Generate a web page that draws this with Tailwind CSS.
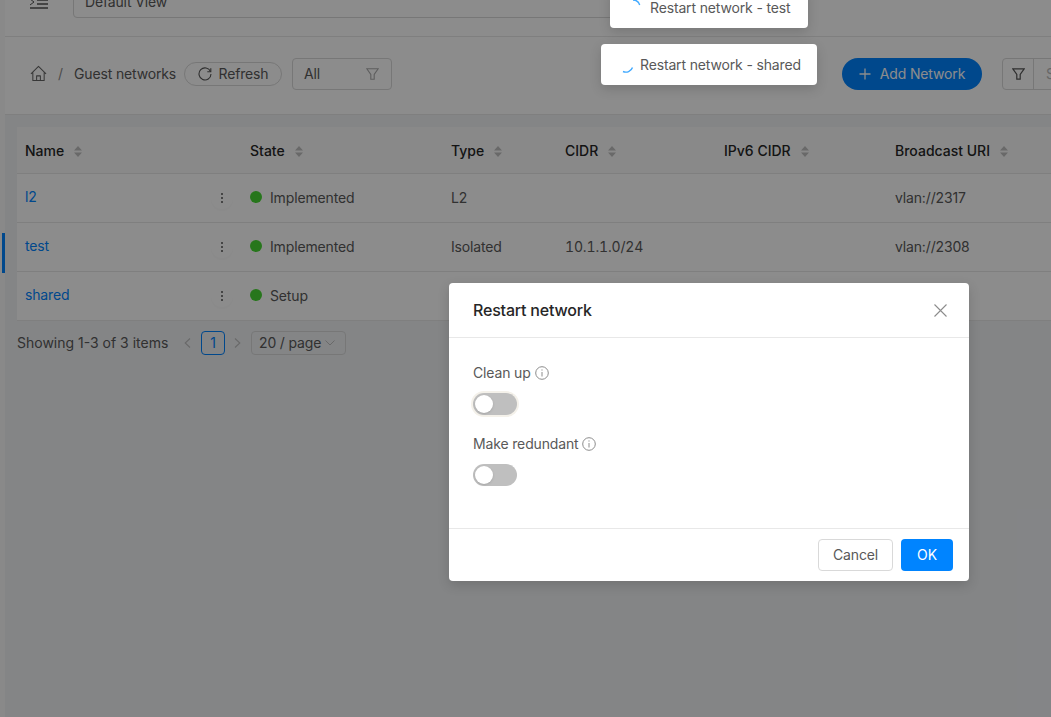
<!DOCTYPE html>
<html>

<head>
  <script src="https://cdn.jsdelivr.net/npm/@tailwindcss/browser@4"></script>
</head>

<body class="bg-[#fafafa]">
  <div class="relative h-[717px] w-[1051px] overflow-hidden font-['Inter','Liberation_Sans',sans-serif] text-sm tracking-[-0.15px] text-[#595959]">
    <div class="ml-[5px] h-full bg-[#f0f2f5]">
      <!-- header -->
      <div class="flex h-[37px] items-end border-b border-[#e8e8e8] bg-white pb-[18px]">
        <svg class="ml-[25px] mb-[9px] h-[14px] w-[18px]" viewBox="0 0 18 14" fill="none" stroke="#555" stroke-width="1.6">
          <path d="M0 13h18M7 9h11M7 5h11" />
          <path d="M0 4l4 3-4 3" stroke-width="1" />
        </svg>
        <div class="ml-[25px] flex h-[32px] w-[560px] items-center rounded-b border border-[#d9d9d9] px-[11px]">Default View</div>
      </div>

      <!-- toolbar -->
      <div class="flex h-[78px] items-center border-b border-[#e8e8e8] bg-white pb-[4px] pl-[25px]">
        <svg class="h-[17px] w-[17px] shrink-0" viewBox="0 0 18 18" fill="none" stroke="#666" stroke-width="1.1" stroke-linejoin="round">
          <path d="M1 9.5L9 1.5l8 8M3 8v8.5h12V8" />
          <path d="M7 16.5v-5h4v5" />
        </svg>
        <span class="ml-[11px] w-[16px] shrink-0 text-[#8c8c8c]">/</span>
        <span class="w-[101px] shrink-0 whitespace-nowrap">Guest networks</span>
        <button class="ml-[9px] flex h-[24px] w-[98px] shrink-0 items-center justify-center gap-[7px] rounded-full border border-[#d9d9d9]">
          <svg class="h-[14px] w-[14px]" viewBox="0 0 14 14" fill="none" stroke="#555" stroke-width="1.1">
            <path d="M12.5 4.5A6 6 0 1 0 13 7" />
            <path d="M12.8 1.2v3.5H9.3" />
          </svg>
          Refresh
        </button>
        <div class="ml-[10px] flex h-[32px] w-[100px] shrink-0 items-center justify-between rounded border border-[#d9d9d9] pl-[11px] pr-[12px]">
          All
          <svg class="h-[12px] w-[13px]" viewBox="0 0 13 12" fill="none" stroke="#aaa" stroke-width="1.1">
            <path d="M.8.8h11.4L8.2 6.5v4.7H4.8V6.5z" />
          </svg>
        </div>
        <button class="ml-[450px] flex h-[32px] w-[140px] shrink-0 items-center justify-center gap-[9px] whitespace-nowrap rounded-full bg-[#0084ff] text-white">
          <svg class="h-[12px] w-[12px]" viewBox="0 0 12 12" stroke="#fff" stroke-width="1.3">
            <path d="M6 .5v11M.5 6h11" />
          </svg>
          Add Network
        </button>
        <div class="ml-[20px] flex h-[32px] w-[100px] shrink-0 rounded-l border border-[#d9d9d9]">
          <div class="flex w-[31px] items-center justify-center border-r border-[#d9d9d9]">
            <svg class="h-[12px] w-[13px]" viewBox="0 0 13 12" fill="none" stroke="#555" stroke-width="1.2">
              <path d="M.8.8h11.4L8.2 6.5v4.7H4.8V6.5z" />
            </svg>
          </div>
          <span class="pl-[12px] leading-[30px] text-[#bbb]">S</span>
        </div>
      </div>

      <!-- table -->
      <div class="pl-[12px] pt-[12px]">
        <table class="w-[1034px] table-fixed border-separate border-spacing-0 bg-white text-left">
          <colgroup>
            <col class="w-[225px]" />
            <col class="w-[201px]" />
            <col class="w-[114px]" />
            <col class="w-[159px]" />
            <col class="w-[171px]" />
            <col />
          </colgroup>
          <thead class="bg-[#fafafa] tracking-normal text-[#262626]">
            <tr class="h-[47px]">
              <th class="border-b border-[#e8e8e8] pl-[8px] pt-[2px] font-medium"><span class="flex items-center gap-[10px]">Name
                  <svg class="h-[11px] w-[8px]" viewBox="0 0 8 11" fill="#bfbfbf"><path d="M4 0l4 4.5H0zM4 11L0 6.5h8z" /></svg></span></th>
              <th class="border-b border-[#e8e8e8] pl-[8px] pt-[2px] font-medium"><span class="flex items-center gap-[10px]">State
                  <svg class="h-[11px] w-[8px]" viewBox="0 0 8 11" fill="#bfbfbf"><path d="M4 0l4 4.5H0zM4 11L0 6.5h8z" /></svg></span></th>
              <th class="border-b border-[#e8e8e8] pl-[8px] pt-[2px] font-medium"><span class="flex items-center gap-[10px]">Type
                  <svg class="h-[11px] w-[8px]" viewBox="0 0 8 11" fill="#bfbfbf"><path d="M4 0l4 4.5H0zM4 11L0 6.5h8z" /></svg></span></th>
              <th class="border-b border-[#e8e8e8] pl-[8px] pt-[2px] font-medium"><span class="flex items-center gap-[10px]">CIDR
                  <svg class="h-[11px] w-[8px]" viewBox="0 0 8 11" fill="#bfbfbf"><path d="M4 0l4 4.5H0zM4 11L0 6.5h8z" /></svg></span></th>
              <th class="border-b border-[#e8e8e8] pl-[8px] pt-[2px] font-medium"><span class="flex items-center gap-[10px]">IPv6 CIDR
                  <svg class="h-[11px] w-[8px]" viewBox="0 0 8 11" fill="#bfbfbf"><path d="M4 0l4 4.5H0zM4 11L0 6.5h8z" /></svg></span></th>
              <th class="border-b border-[#e8e8e8] pl-[8px] pt-[2px] font-medium"><span class="flex items-center gap-[10px] whitespace-nowrap">Broadcast URI
                  <svg class="h-[11px] w-[8px]" viewBox="0 0 8 11" fill="#bfbfbf"><path d="M4 0l4 4.5H0zM4 11L0 6.5h8z" /></svg></span></th>
            </tr>
          </thead>
          <tbody>
            <tr class="h-[49px]">
              <td class="border-b border-[#e8e8e8] pl-[8px]"><div class="flex items-center justify-between pr-[9px] text-[#0084ff]"><span class="-mt-[2px]">l2</span>
                  <span class="flex h-[22px] w-[22px] items-center justify-center rounded-full shadow-[0_2px_1px_rgba(0,0,0,0.02)]"><svg class="h-[12px] w-[4px]" viewBox="0 0 4 12" fill="#555"><circle cx="2" cy="2" r="1" /><circle cx="2" cy="6" r="1" /><circle cx="2" cy="10" r="1" /></svg></span></div></td>
              <td class="border-b border-[#e8e8e8] pl-[8px]"><div class="flex items-center gap-[8px]"><span class="-mt-[2px] h-[12px] w-[12px] rounded-full bg-[#48d834]"></span>Implemented</div></td>
              <td class="border-b border-[#e8e8e8] pl-[8px]">L2</td>
              <td class="border-b border-[#e8e8e8] pl-[8px]"></td>
              <td class="border-b border-[#e8e8e8] pl-[8px]"></td>
              <td class="border-b border-[#e8e8e8] pl-[8px]">vlan://2317</td>
            </tr>
            <tr class="h-[49px]">
              <td class="border-b border-[#e8e8e8] pl-[8px]"><div class="flex items-center justify-between pr-[9px] text-[#0084ff]"><span class="-mt-[2px]">test</span>
                  <span class="flex h-[22px] w-[22px] items-center justify-center rounded-full shadow-[0_2px_1px_rgba(0,0,0,0.02)]"><svg class="h-[12px] w-[4px]" viewBox="0 0 4 12" fill="#555"><circle cx="2" cy="2" r="1" /><circle cx="2" cy="6" r="1" /><circle cx="2" cy="10" r="1" /></svg></span></div></td>
              <td class="border-b border-[#e8e8e8] pl-[8px]"><div class="flex items-center gap-[8px]"><span class="-mt-[2px] h-[12px] w-[12px] rounded-full bg-[#48d834]"></span>Implemented</div></td>
              <td class="border-b border-[#e8e8e8] pl-[8px]">Isolated</td>
              <td class="border-b border-[#e8e8e8] pl-[8px] tabular-nums">10.1.1.0/24</td>
              <td class="border-b border-[#e8e8e8] pl-[8px]"></td>
              <td class="border-b border-[#e8e8e8] pl-[8px]">vlan://2308</td>
            </tr>
            <tr class="h-[49px]">
              <td class="border-b border-[#e8e8e8] pl-[8px]"><div class="flex items-center justify-between pr-[9px] text-[#0084ff]"><span class="-mt-[2px]">shared</span>
                  <span class="flex h-[22px] w-[22px] items-center justify-center rounded-full shadow-[0_2px_1px_rgba(0,0,0,0.02)]"><svg class="h-[12px] w-[4px]" viewBox="0 0 4 12" fill="#555"><circle cx="2" cy="2" r="1" /><circle cx="2" cy="6" r="1" /><circle cx="2" cy="10" r="1" /></svg></span></div></td>
              <td class="border-b border-[#e8e8e8] pl-[8px]"><div class="flex items-center gap-[8px]"><span class="-mt-[2px] h-[12px] w-[12px] rounded-full bg-[#48d834]"></span>Setup</div></td>
              <td class="border-b border-[#e8e8e8] pl-[8px]"></td>
              <td class="border-b border-[#e8e8e8] pl-[8px]"></td>
              <td class="border-b border-[#e8e8e8] pl-[8px]"></td>
              <td class="border-b border-[#e8e8e8] pl-[8px]"></td>
            </tr>
          </tbody>
        </table>

        <!-- pagination -->
        <div class="mt-[10px] flex items-center whitespace-nowrap">
          <span class="w-[152px] tracking-normal">Showing 1-3 of 3 items</span>
          <svg class="ml-[15px] h-[10px] w-[7px]" viewBox="0 0 7 10" fill="none" stroke="#bfbfbf" stroke-width="1.1"><path d="M6 .5L1.2 5 6 9.5" /></svg>
          <span class="ml-[10px] flex h-[24px] w-[24px] items-center justify-center rounded border border-[#0084ff] text-[#0084ff]">1</span>
          <svg class="ml-[9px] h-[10px] w-[7px]" viewBox="0 0 7 10" fill="none" stroke="#bfbfbf" stroke-width="1.1"><path d="M1 .5L5.8 5 1 9.5" /></svg>
          <div class="ml-[10px] flex h-[24px] w-[95px] items-center justify-between rounded border border-[#d9d9d9] pl-[7px] pr-[10px]">
            20 / page
            <svg class="h-[6px] w-[10px]" viewBox="0 0 10 6" fill="none" stroke="#bfbfbf" stroke-width="1"><path d="M.5.5L5 5 9.5.5" /></svg>
          </div>
        </div>
      </div>
    </div>

    <!-- selected row marker -->
    <div class="absolute left-[2px] top-[233px] h-[40px] w-[3px] bg-[#0084ff]"></div>

    <!-- dimmed mask -->
    <div class="absolute inset-0 bg-black/45"></div>

    <!-- notifications -->
    <div class="absolute left-[610px] top-[-13px] flex h-[41px] w-[198px] items-center rounded bg-white pl-[40px] shadow-[0_4px_12px_rgba(0,0,0,0.15)]">
      <svg class="absolute left-[15px] top-[12px] h-[16px] w-[16px]" viewBox="0 0 16 16" fill="none" stroke="#40a9ff" stroke-width="1.4"><path d="M8 1a7 7 0 0 1 6.7 5" /></svg>
      Restart network - test
    </div>
    <div class="absolute left-[601px] top-[44px] flex h-[41px] w-[216px] items-center rounded bg-white pl-[39px] shadow-[0_4px_12px_rgba(0,0,0,0.15)]">
      <svg class="absolute left-[17px] top-[13px] h-[16px] w-[16px]" viewBox="0 0 16 16" fill="none" stroke="#40a9ff" stroke-width="1.4"><path d="M14.5 10.5A7 7 0 0 1 5 14.5" /></svg>
      Restart network - shared
    </div>

    <!-- modal -->
    <div class="absolute left-[449px] top-[283px] flex h-[298px] w-[520px] flex-col rounded bg-white shadow-[0_4px_12px_rgba(0,0,0,0.15)]">
      <div class="flex h-[55px] items-center justify-between border-b border-[#e8e8e8] pl-[24px] pr-[22px]">
        <span class="text-base font-medium tracking-[-0.2px] text-[#262626]">Restart network</span>
        <svg class="h-[13px] w-[13px]" viewBox="0 0 13 13" stroke="#8c8c8c" stroke-width="1.1"><path d="M.5.5l12 12M12.5.5l-12 12" /></svg>
      </div>
      <div class="flex-1 pl-[24px] pt-[25px]">
        <div class="flex items-center gap-[4px]">Clean up
          <svg class="h-[14px] w-[14px]" viewBox="0 0 14 14" fill="none" stroke="#8c8c8c"><circle cx="7" cy="7" r="6.3" /><path d="M7 6v4.5M7 3.4v1.2" /></svg>
        </div>
        <div class="mt-[10px] h-[22px] w-[44px] rounded-full bg-[#bfbfbf] p-[2px] ring-2 ring-[#f4f1ea]">
          <div class="h-[18px] w-[18px] rounded-full bg-white shadow-sm"></div>
        </div>
        <div class="mt-[19px] flex items-center gap-[4px]">Make redundant
          <svg class="h-[14px] w-[14px]" viewBox="0 0 14 14" fill="none" stroke="#8c8c8c"><circle cx="7" cy="7" r="6.3" /><path d="M7 6v4.5M7 3.4v1.2" /></svg>
        </div>
        <div class="mt-[10px] h-[22px] w-[44px] rounded-full bg-[#bfbfbf] p-[2px]">
          <div class="h-[18px] w-[18px] rounded-full bg-white shadow-sm"></div>
        </div>
      </div>
      <div class="flex h-[53px] items-center justify-end gap-[8px] border-t border-[#e8e8e8] pr-[16px]">
        <button class="h-[32px] w-[75px] rounded border border-[#d9d9d9] bg-white">Cancel</button>
        <button class="h-[32px] w-[52px] rounded bg-[#0084ff] text-white">OK</button>
      </div>
    </div>
  </div>
</body>

</html>
